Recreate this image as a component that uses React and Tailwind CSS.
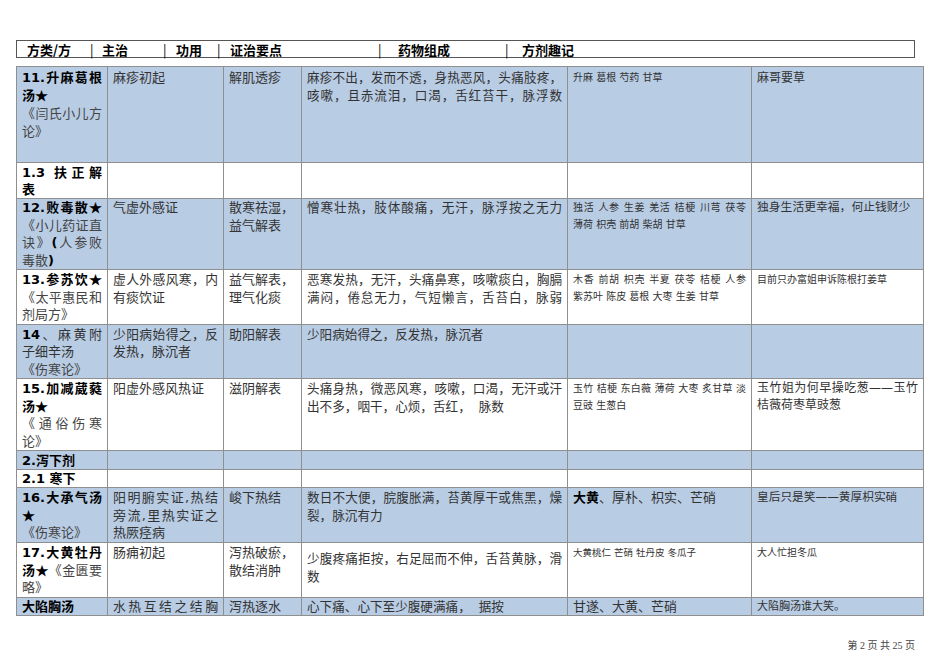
import clsx from "clsx";

const BLUE = "bg-[#b8cce4]";

function L({ children, j, className }) {
  return (
    <div className={clsx(j && "[text-align-last:justify] text-justify", className)}>
      {children}
    </div>
  );
}

function B({ children }) {
  return <span className="font-bold text-black">{children}</span>;
}

function G({ children }) {
  return <span className="text-[#444]">{children}</span>;
}

function Star() {
  return <span className="font-['Noto_Sans_CJK_SC',sans-serif] leading-none">★</span>;
}

function Td({ children, className }) {
  return (
    <td className={clsx("border border-[#8f8f8f] align-top px-[5px] pt-[1px] overflow-hidden", className)}>
      {children}
    </td>
  );
}

const sm = "text-[10px] leading-[17px]";
const c4 = "text-[12.6px]";

export default function App() {
  return (
    <div className="w-[950px] h-[672px] bg-white text-[#333] font-['DejaVu_Sans','Noto_Sans_CJK_SC',sans-serif] text-[13px] leading-[17.5px] pt-[40px] pl-[16px]">
      {/* header strip */}
      <div className="w-[899px] h-[18px] border border-[#555] flex items-center text-[13px] font-bold text-black leading-none font-['Noto_Sans_CJK_SC',sans-serif]">
        <span className="ml-[10px] w-[63px]">方类/方</span>
        <span className="w-[12px] font-normal">|</span>
        <span className="w-[61px]">主治</span>
        <span className="w-[13px] font-normal">|</span>
        <span className="w-[41px]">功用</span>
        <span className="w-[13px] font-normal">|</span>
        <span className="w-[148px]">证治要点</span>
        <span className="w-[20px] font-normal">|</span>
        <span className="w-[107px]">药物组成</span>
        <span className="w-[17px] font-normal">|</span>
        <span>方剂趣记</span>
      </div>

      <table className="mt-[8px] w-[907px] table-fixed border-collapse border border-[#9a9a9a]">
        <colgroup>
          <col className="w-[91px]" />
          <col className="w-[116px]" />
          <col className="w-[78px]" />
          <col className="w-[266px]" />
          <col className="w-[184px]" />
          <col className="w-[172px]" />
        </colgroup>
        <tbody>
          <tr className={clsx("h-[96px] [&>td]:pt-[2px] leading-[18px]", BLUE)}>
            <Td>
              <L j><B>11.升麻葛根</B></L>
              <L><B>汤<Star /></B></L>
              <L j><G>《闫氏小儿方</G></L>
              <L><G>论》</G></L>
            </Td>
            <Td>麻疹初起</Td>
            <Td>解肌透疹</Td>
            <Td className={c4}>
              <L j>麻疹不出，发而不透，身热恶风，头痛肢疼，</L>
              <L j>咳嗽，且赤流泪，口渴，舌红苔干，脉浮数</L>
            </Td>
            <Td className={sm}>升麻 葛根 芍药 甘草</Td>
            <Td className="text-[12px]">麻哥要草</Td>
          </tr>

          <tr className="h-[35px] leading-[17px]">
            <Td>
              <L j><B>1.3 扶正解</B></L>
              <L><B>表</B></L>
            </Td>
            <Td />
            <Td />
            <Td />
            <Td />
            <Td />
          </tr>

          <tr className={clsx("h-[71px] [&>td]:pt-0", BLUE)}>
            <Td className="pt-[1px]">
              <L j><B>12.败毒散<Star /></B></L>
              <L j><G>《小儿药证直</G></L>
              <L j><G>诀》</G><B>(</B><G>人参败</G></L>
              <L><G>毒散</G><B>)</B></L>
            </Td>
            <Td className="pt-[1px]">气虚外感证</Td>
            <Td className="pt-[1px]">
              <L>散寒祛湿，</L>
              <L>益气解表</L>
            </Td>
            <Td className={clsx(c4, "pt-[1px]")}>
              <L j>憎寒壮热，肢体酸痛，无汗，脉浮按之无力</L>
            </Td>
            <Td className={clsx(sm, "pt-[1px]")}>
              <L j>独活 人参 生姜 羌活 桔梗 川芎 茯苓</L>
              <L>薄荷 枳壳 前胡 柴胡 甘草</L>
            </Td>
            <Td className="text-[11.8px] pt-[1px]">独身生活更幸福，何止钱财少</Td>
          </tr>

          <tr className="h-[54px]">
            <Td>
              <L j><B>13.参苏饮<Star /></B></L>
              <L j><G>《太平惠民和</G></L>
              <L><G>剂局方》</G></L>
            </Td>
            <Td>
              <L j className="text-[12.8px]">虚人外感风寒，内</L>
              <L>有痰饮证</L>
            </Td>
            <Td>
              <L>益气解表，</L>
              <L>理气化痰</L>
            </Td>
            <Td className={c4}>
              <L j>恶寒发热，无汗，头痛鼻寒，咳嗽痰白，胸膈</L>
              <L j>满闷，倦怠无力，气短懒言，舌苔白，脉弱</L>
            </Td>
            <Td className={sm}>
              <L j>木香 前胡 枳壳 半夏 茯苓 桔梗 人参</L>
              <L>紫苏叶 陈皮 葛根 大枣 生姜 甘草</L>
            </Td>
            <Td className="text-[10px]">目前只办富姐申诉陈根打姜草</Td>
          </tr>

          <tr className={clsx("h-[54px]", BLUE)}>
            <Td>
              <L j><B>14</B>、麻黄附</L>
              <L>子细辛汤</L>
              <L><G>《伤寒论》</G></L>
            </Td>
            <Td>
              <L j className="text-[12.8px]">少阳病始得之，反</L>
              <L>发热，脉沉者</L>
            </Td>
            <Td>助阳解表</Td>
            <Td className={c4}>少阳病始得之，反发热，脉沉者</Td>
            <Td />
            <Td />
          </tr>

          <tr className="h-[72px]">
            <Td>
              <L j><B>15.加减葳蕤</B></L>
              <L><B>汤<Star /></B></L>
              <L j><G>《通俗伤寒</G></L>
              <L><G>论》</G></L>
            </Td>
            <Td>阳虚外感风热证</Td>
            <Td>滋阴解表</Td>
            <Td className={c4}>
              <L j>头痛身热，微恶风寒，咳嗽，口渴，无汗或汗</L>
              <L>出不多，咽干，心烦，舌红，&nbsp;&nbsp;脉数</L>
            </Td>
            <Td className={sm}>
              <L j>玉竹 桔梗 东白薇 薄荷 大枣 炙甘草 淡</L>
              <L>豆豉 生葱白</L>
            </Td>
            <Td className="text-[12px] leading-[17px]">
              <L j>玉竹姐为何早操吃葱——玉竹</L>
              <L>桔薇荷枣草豉葱</L>
            </Td>
          </tr>

          <tr className={clsx("h-[19px] leading-[17px]", BLUE)}>
            <Td><B>2.泻下剂</B></Td>
            <Td />
            <Td />
            <Td />
            <Td />
            <Td />
          </tr>

          <tr className="h-[18px] leading-[16px]">
            <Td><B>2.1 寒下</B></Td>
            <Td />
            <Td />
            <Td />
            <Td />
            <Td />
          </tr>

          <tr className={clsx("h-[55px]", BLUE)}>
            <Td>
              <L j><B>16.大承气汤</B></L>
              <L><B><Star /></B></L>
              <L><G>《伤寒论》</G></L>
            </Td>
            <Td>
              <L j>阳明腑实证,热结</L>
              <L j>旁流,里热实证之</L>
              <L>热厥痉病</L>
            </Td>
            <Td>峻下热结</Td>
            <Td className={c4}>
              <L j>数日不大便，脘腹胀满，苔黄厚干或焦黑，燥</L>
              <L>裂，脉沉有力</L>
            </Td>
            <Td className="text-[13px]"><B>大黄</B>、厚朴、枳实、芒硝</Td>
            <Td className="text-[11.7px]">皇后只是笑——黄厚枳实硝</Td>
          </tr>

          <tr className="h-[54px]">
            <Td>
              <L j><B>17.大黄牡丹</B></L>
              <L j><B>汤<Star /></B><G>《金匮要</G></L>
              <L><G>略》</G></L>
            </Td>
            <Td>肠痈初起</Td>
            <Td>
              <L>泻热破瘀，</L>
              <L>散结消肿</L>
            </Td>
            <Td className={clsx(c4, "pt-[7px]")}>
              <L j>少腹疼痛拒按，右足屈而不伸，舌苔黄脉，滑</L>
              <L>数</L>
            </Td>
            <Td className="text-[9.5px] leading-[17px]">大黄桃仁 芒硝 牡丹皮 冬瓜子</Td>
            <Td className="text-[10px] leading-[17px]">大人忙担冬瓜</Td>
          </tr>

          <tr className={clsx("h-[18px] leading-[16px]", BLUE)}>
            <Td><B>大陷胸汤</B></Td>
            <Td><L j className="text-[12.8px]">水热互结之结胸</L></Td>
            <Td>泻热逐水</Td>
            <Td className={c4}>心下痛、心下至少腹硬满痛，&nbsp;&nbsp;据按</Td>
            <Td className="text-[13px]">甘遂、大黄、芒硝</Td>
            <Td className="text-[11px]">大陷胸汤谁大笑。</Td>
          </tr>
        </tbody>
      </table>

      <div className="w-[899px] flex justify-end mt-[25px] text-[10px] text-[#444] leading-none font-['Liberation_Serif','Noto_Sans_CJK_SC',serif]">
        第 2 页 共 25 页
      </div>
    </div>
  );
}
